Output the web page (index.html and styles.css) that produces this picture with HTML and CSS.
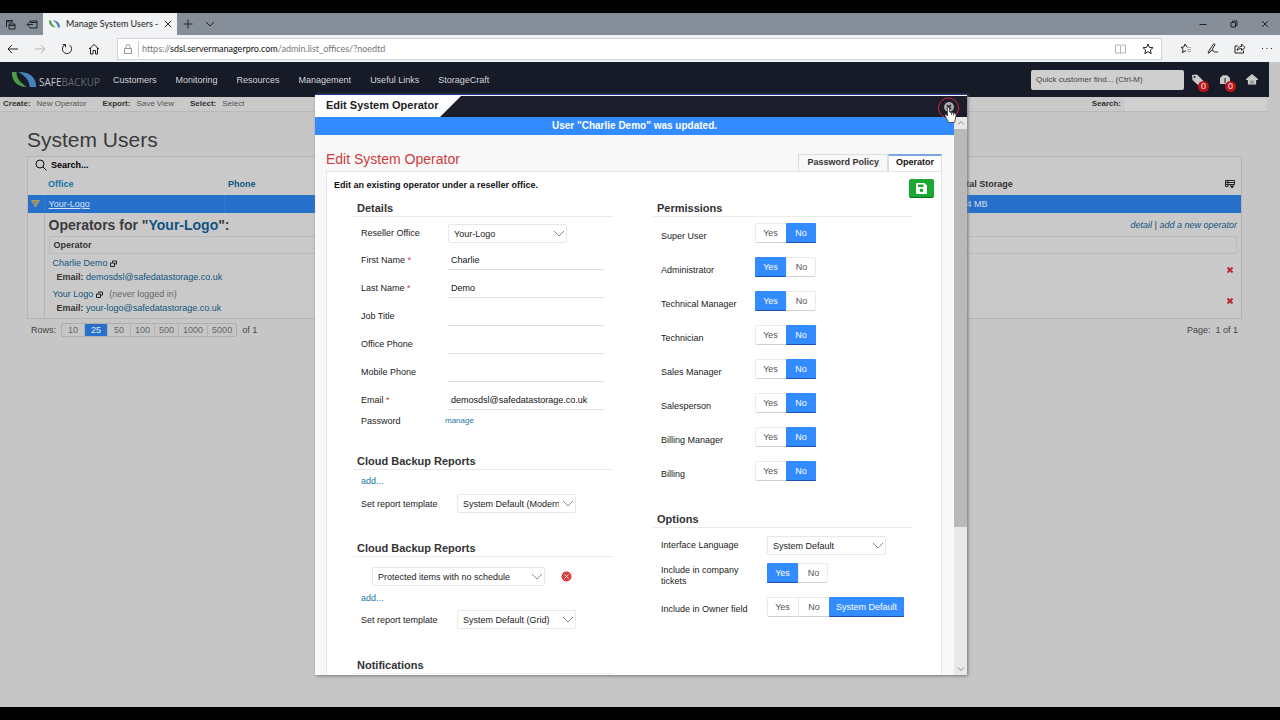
FILE: index.html
```html
<!DOCTYPE html>
<html lang="en">
<head>
<meta charset="utf-8">
<title>Manage System Users</title>
<link rel="stylesheet" href="styles.css">
</head>
<body>
<div class="browser">
  <div class="tabbar">
    <button class="chrome-btn" aria-label="Tabs set aside"><svg width="11" height="11" viewBox="0 0 11 11"><path d="M1.500 8V1.500H8M1.500 3H8M4 5H10V10H4ZM4 6.500H10"/></svg></button>
    <button class="chrome-btn" aria-label="Set tabs aside"><svg width="12" height="11" viewBox="0 0 12 11"><path d="M4 3.500V2H11V9H4V7.500M4 3.500H11M1 5.500H7M3 3.500L1 5.500L3 7.500"/></svg></button>
    <div class="tab">
      <svg class="tab-logo" width="11" height="8" viewBox="0 0 26 16"><path class="green" d="M0 0H5C5 7 9 11 16 16C5 16 0 9 0 0Z"/><path class="blue" d="M9 0C20 0 26 6 26 16H21C20 9 16 4 9 0Z"/></svg>
      <span class="tab-title">Manage System Users -</span>
      <button class="chrome-btn" aria-label="Close tab"><svg width="8" height="8" viewBox="0 0 8 8"><path d="M1 1L7 7M7 1L1 7"/></svg></button>
    </div>
    <button class="chrome-btn new-tab" aria-label="New tab"><svg width="10" height="10" viewBox="0 0 10 10"><path d="M5 0.500V9.500M0.500 5H9.500"/></svg></button>
    <button class="chrome-btn" aria-label="Tab previews"><svg width="10" height="8" viewBox="0 0 10 8"><path d="M1 2L5 6L9 2"/></svg></button>
    <div class="window-buttons">
      <button class="chrome-btn" aria-label="Minimise"><svg width="8" height="8" viewBox="0 0 8 8"><path d="M0.500 4.500H7.500"/></svg></button>
      <button class="chrome-btn" aria-label="Restore"><svg width="8" height="8" viewBox="0 0 8 8"><path d="M1 2.500H5.500V7H1ZM2.500 2.500V1H7V5.500H5.500"/></svg></button>
      <button class="chrome-btn" aria-label="Close"><svg width="8" height="8" viewBox="0 0 8 8"><path d="M1 1L7 7M7 1L1 7"/></svg></button>
    </div>
  </div>
  <div class="addressbar">
    <button class="chrome-btn" aria-label="Back"><svg width="12" height="10" viewBox="0 0 12 10"><path d="M11 5H1M5 1L1 5L5 9"/></svg></button>
    <button class="chrome-btn faded" aria-label="Forward"><svg width="12" height="10" viewBox="0 0 12 10"><path d="M1 5H11M7 1L11 5L7 9"/></svg></button>
    <button class="chrome-btn" aria-label="Refresh"><svg width="12" height="12" viewBox="0 0 12 12"><path d="M4 1.800A4.600 4.600 0 1 0 8.500 2.100M1.800 1.500H4.500V4.200"/></svg></button>
    <button class="chrome-btn" aria-label="Home"><svg width="12" height="12" viewBox="0 0 12 12"><path d="M1 6L6 1.500L11 6M2.500 5V11H5V7.500H7.500V11H9.500V5"/></svg></button>
    <div class="url-box">
      <svg class="lock" width="8" height="10" viewBox="0 0 8 10"><path d="M0.500 4.500H7.500V9.500H0.500ZM2 4.500V2.500A2 2 0 0 1 6 2.500V4.500"/></svg>
      <span class="url">https://<b>sdsl.servermanagerpro.com</b>/admin.list_offices/?noedtd</span>
      <button class="chrome-btn faded" aria-label="Reading view"><svg width="11" height="10" viewBox="0 0 11 10"><path d="M0.500 1H4.500L5.500 2L6.500 1H10.500V9H6.500L5.500 9.500L4.500 9H0.500ZM5.500 2V9"/></svg></button>
      <button class="chrome-btn" aria-label="Add to favourites"><svg width="12" height="12" viewBox="0 0 12 12"><path d="M6 1L7.400 4.400L11 4.700L8.300 7.100L9.200 10.700L6 8.700L2.800 10.700L3.700 7.100L1 4.700L4.600 4.400Z"/></svg></button>
    </div>
    <div class="browser-tools">
      <button class="chrome-btn" aria-label="Hub"><svg width="12" height="11" viewBox="0 0 12 11"><path d="M7 4L5 1L3.800 4L1 4.300L3.200 6.300L2.300 9.700L6 7.500"/><path class="hub-lines" d="M7 4.500H11M7 6.500H11M7 8.500H11"/></svg></button>
      <button class="chrome-btn" aria-label="Notes"><svg width="12" height="11" viewBox="0 0 12 11"><path d="M1 10L3 6L7 0.500L8 1.500L5 7L2 10ZM5 8C7 6 6.500 10 8 9C9 8.500 9.500 9.500 11 9"/></svg></button>
      <button class="chrome-btn" aria-label="Share"><svg width="12" height="11" viewBox="0 0 12 11"><path d="M4 3H1V10H9.500V7.500M3 7.500C3.500 4.500 5 3.500 7.500 3.500V1L11 4.500L7.500 7.500V5.500C5.500 5.500 4.500 6 3 7.500Z"/></svg></button>
      <button class="chrome-btn" aria-label="More"><svg width="12" height="4" viewBox="0 0 12 4"><path class="dots" d="M1 1H2V2H1ZM5.500 1H6.500V2H5.500ZM10 1H11V2H10Z"/></svg></button>
    </div>
  </div>

  <div class="site">
    <header class="site-header">
      <a class="brand" href="#"><svg width="26" height="15" viewBox="0 0 26 16"><path class="green" d="M0 0H5C5 7 9 11 16 16C5 16 0 9 0 0Z"/><path class="blue" d="M7 0C20 0 26 6 26 16H19C19 9 14 4 7 0Z"/></svg><span class="brand-safe">SAFE<span class="brand-backup">BACKUP</span></span></a>
      <nav class="main-nav"><a href="#">Customers</a><a href="#">Monitoring</a><a href="#">Resources</a><a href="#">Management</a><a href="#">Useful Links</a><a href="#">StorageCraft</a></nav>
      <input class="quick-find" type="text" placeholder="Quick customer find... (Ctrl-M)" aria-label="Quick customer find">
      <button class="head-icon" aria-label="Tags"><svg width="12" height="12" viewBox="0 0 12 12"><path d="M0 1L5 0.500L12 7.500L7 12L0.500 6Z"/><circle class="hole" cx="2.500" cy="3" r="1"/></svg><span class="badge">0</span></button>
      <button class="head-icon" aria-label="Store"><svg width="12" height="11" viewBox="0 0 12 11"><path d="M1 10V4L3.500 1.500L5.500 1L6 2L6.500 1L8.500 1.500L11 4V10Z"/><path class="hole" d="M5.500 4H6.500V9H5.500Z"/></svg><span class="badge">0</span></button>
      <button class="head-icon" aria-label="Home"><svg width="12" height="11" viewBox="0 0 13 12"><path d="M6.500 0L13 5.500V6.500H11V11.500H2V6.500H0V5.500Z"/><path class="hole-soft" d="M4.500 7H8.500V11.500H4.500Z"/></svg></button>
    </header>
    <div class="toolbar">
      <span class="tool"><b>Create:</b><a href="#">New Operator</a></span>
      <span class="tool"><b>Export:</b><a href="#">Save View</a></span>
      <span class="tool"><b>Select:</b><a href="#">Select</a></span>
      <label class="tool-search"><b>Search:</b><input type="text"></label>
    </div>
    <main class="content">
      <h1>System Users</h1>
      <div class="grid-box">
        <button class="grid-search"><svg width="12" height="12" viewBox="0 0 12 12"><circle cx="5" cy="5" r="4"/><path d="M8 8L11.500 11.500"/></svg>Search...</button>
        <table class="grid">
          <colgroup><col class="c-toggle"><col class="c-office"><col><col class="c-storage"></colgroup>
          <thead><tr><th></th><th><a class="sorted" href="#">Office</a></th><th><a href="#">Phone</a></th><th><span class="storage-head">Total Storage<svg width="10" height="9" viewBox="0 0 10 9"><path d="M0.500 0.500H9.500V4.500H0.500ZM0.500 2.500H9.500M3 0.500V6.500H0.500V4"/><path class="solid" d="M4.500 5.500H9.500L7 8.500Z"/></svg></span></th></tr></thead>
          <tbody>
            <tr class="selected"><td><svg class="tri" width="9" height="8" viewBox="0 0 9 8"><path d="M0.500 0.500H8.500L4.500 7Z"/></svg></td><td><a href="#">Your-Logo</a></td><td></td><td>104 MB</td></tr>
            <tr class="detail"><td></td><td colspan="3">
              <div class="detail-head"><h2>Operators for "<a href="#">Your-Logo</a>":</h2><span class="detail-links"><a href="#">detail</a> | <a href="#">add a new operator</a></span></div>
              <div class="operator-bar">Operator</div>
              <div class="operator"><div><div><a href="#">Charlie Demo</a> <svg class="pop" width="7" height="7" viewBox="0 0 7 7"><path d="M2.500 2.500V1H6.500V4H5M0.500 3H4.500V6.500H0.500Z"/></svg></div><div class="mail"><b>Email:</b> <a href="#">demosdsl@safedatastorage.co.uk</a></div></div><button class="delete" aria-label="Delete Charlie Demo"><svg width="6" height="6" viewBox="0 0 6 6"><path d="M0.500 0.500L5.500 5.500M5.500 0.500L0.500 5.500"/></svg></button></div>
              <div class="operator"><div><div><a href="#">Your Logo</a> <svg class="pop" width="7" height="7" viewBox="0 0 7 7"><path d="M2.500 2.500V1H6.500V4H5M0.500 3H4.500V6.500H0.500Z"/></svg> <span class="never">(never logged in)</span></div><div class="mail"><b>Email:</b> <a href="#">your-logo@safedatastorage.co.uk</a></div></div><button class="delete" aria-label="Delete Your Logo"><svg width="6" height="6" viewBox="0 0 6 6"><path d="M0.500 0.500L5.500 5.500M5.500 0.500L0.500 5.500"/></svg></button></div>
            </td></tr>
          </tbody>
        </table>
      </div>
      <div class="pager"><span>Rows:</span><div class="pages"><button>10</button><button class="on">25</button><button>50</button><button>100</button><button>500</button><button>1000</button><button>5000</button></div><span>of 1</span><span class="page-of">Page:&nbsp; 1 of 1</span></div>
    </main>
  </div>
</div>

<div class="overlay">
  <div class="modal" role="dialog" aria-label="Edit System Operator">
    <div class="modal-head"><span class="modal-title">Edit System Operator</span>
      <button class="close" aria-label="Close dialog"><svg width="12" height="12" viewBox="0 0 12 12"><circle cx="6" cy="6" r="5"/><path d="M4 4L8 8M8 4L4 8"/></svg></button>
    </div>
    <div class="modal-body">
      <div class="modal-page">
        <div class="notice">User "Charlie Demo" was updated.</div>
        <div class="tab-row"><h2>Edit System Operator</h2><div class="form-tabs"><button>Password Policy</button><button class="on">Operator</button></div></div>
        <form class="panel">
          <div class="panel-head"><b>Edit an existing operator under a reseller office.</b><button class="save" type="button" aria-label="Save"><svg width="11" height="11" viewBox="0 0 11 11"><path fill-rule="evenodd" d="M1 0H8.500L11 2.500V10Q11 11 10 11H1Q0 11 0 10V1Q0 0 1 0ZM2 1.500V4H7.500V1.500ZM5.500 5.500A1.800 1.800 0 1 0 5.510 5.500Z"/></svg></button></div>
          <div class="columns">
            <div class="col">
              <section class="details">
                <h3>Details</h3>
                <div class="field first"><label for="office">Reseller Office</label><select id="office" class="sel"><option>Your-Logo</option></select></div>
                <div class="field"><label for="fn">First Name <i>*</i></label><input id="fn" type="text" value="Charlie"></div>
                <div class="field"><label for="ln">Last Name <i>*</i></label><input id="ln" type="text" value="Demo"></div>
                <div class="field"><label for="jt">Job Title</label><input id="jt" type="text"></div>
                <div class="field"><label for="op">Office Phone</label><input id="op" type="text"></div>
                <div class="field"><label for="mp">Mobile Phone</label><input id="mp" type="text"></div>
                <div class="field"><label for="em">Email <i>*</i></label><input id="em" type="text" value="demosdsl@safedatastorage.co.uk"></div>
                <div class="password"><span>Password</span><a href="#">manage</a></div>
              </section>
              <section class="report">
                <h3>Cloud Backup Reports</h3>
                <a class="add" href="#">add...</a>
                <div class="template"><label for="t1">Set report template</label><select id="t1" class="sel"><option>System Default (Modern)</option></select></div>
              </section>
              <section class="report">
                <h3>Cloud Backup Reports</h3>
                <div class="report-item"><select class="sel wide" aria-label="Report"><option>Protected items with no schedule</option></select><button class="remove" type="button" aria-label="Remove report"><svg width="11" height="11" viewBox="0 0 11 11"><circle cx="5.500" cy="5.500" r="5"/><path d="M3.500 3.500L7.500 7.500M7.500 3.500L3.500 7.500"/></svg></button></div>
                <a class="add" href="#">add...</a>
                <div class="template"><label for="t2">Set report template</label><select id="t2" class="sel"><option>System Default (Grid)</option></select></div>
              </section>
              <section><h3>Notifications</h3></section>
            </div>
            <div class="col">
              <section class="permissions">
                <h3>Permissions</h3>
                <div class="perm" role="radiogroup" aria-label="Super User"><span>Super User</span><div class="toggle"><label><input type="radio" name="p1">Yes</label><label><input type="radio" name="p1" checked>No</label></div></div>
                <div class="perm" role="radiogroup" aria-label="Administrator"><span>Administrator</span><div class="toggle"><label><input type="radio" name="p2" checked>Yes</label><label><input type="radio" name="p2">No</label></div></div>
                <div class="perm" role="radiogroup" aria-label="Technical Manager"><span>Technical Manager</span><div class="toggle"><label><input type="radio" name="p3" checked>Yes</label><label><input type="radio" name="p3">No</label></div></div>
                <div class="perm" role="radiogroup" aria-label="Technician"><span>Technician</span><div class="toggle"><label><input type="radio" name="p4">Yes</label><label><input type="radio" name="p4" checked>No</label></div></div>
                <div class="perm" role="radiogroup" aria-label="Sales Manager"><span>Sales Manager</span><div class="toggle"><label><input type="radio" name="p5">Yes</label><label><input type="radio" name="p5" checked>No</label></div></div>
                <div class="perm" role="radiogroup" aria-label="Salesperson"><span>Salesperson</span><div class="toggle"><label><input type="radio" name="p6">Yes</label><label><input type="radio" name="p6" checked>No</label></div></div>
                <div class="perm" role="radiogroup" aria-label="Billing Manager"><span>Billing Manager</span><div class="toggle"><label><input type="radio" name="p7">Yes</label><label><input type="radio" name="p7" checked>No</label></div></div>
                <div class="perm" role="radiogroup" aria-label="Billing"><span>Billing</span><div class="toggle"><label><input type="radio" name="p8">Yes</label><label><input type="radio" name="p8" checked>No</label></div></div>
              </section>
              <section class="options">
                <h3>Options</h3>
                <div class="option language"><label for="lang">Interface Language</label><select id="lang" class="sel"><option>System Default</option></select></div>
                <div class="option tickets" role="radiogroup" aria-label="Include in company tickets"><span>Include in company tickets</span><div class="toggle"><label><input type="radio" name="o1" checked>Yes</label><label><input type="radio" name="o1">No</label></div></div>
                <div class="option owner" role="radiogroup" aria-label="Include in Owner field"><span>Include in Owner field</span><div class="toggle"><label><input type="radio" name="o2">Yes</label><label><input type="radio" name="o2">No</label><label class="long"><input type="radio" name="o2" checked>System Default</label></div></div>
              </section>
            </div>
          </div>
        </form>
      </div>
      <div class="scrollbar"><svg width="12" height="12" viewBox="0 0 12 12"><path d="M3 7.500L6 4.500L9 7.500"/></svg><div class="thumb"></div><svg width="12" height="12" viewBox="0 0 12 12"><path d="M3 4.500L6 7.500L9 4.500"/></svg></div>
    </div>
    <svg class="pointer" width="22" height="28" viewBox="0 0 22 28"><circle cx="10.500" cy="11" r="10"/><path d="M9.500 11.500C9.500 10 11.500 10 11.500 11.500V15L16 16C17.500 16.300 18 17 18 18.500C18 21 17 23 16.500 25.500H10.500C10 23 7.500 20.500 7 18.500C7 17 8.500 17.500 9.500 19Z"/><path d="M13.500 15.500V18M15.500 16V18.500"/></svg>
  </div>
</div>
</body>
</html>
```
FILE: styles.css
```css
* { box-sizing: border-box; }
body {
  margin: 0;
  min-height: 100vh;
  padding: 13px 0;
  display: flex;
  flex-direction: column;
  background: #000;
  font-family: "Liberation Sans", Arial, sans-serif;
  font-size: 9px;
  line-height: 12px;
  color: #333;
  overflow: hidden;
}
button, input, select { font: inherit; color: inherit; margin: 0; border-radius: 0; }
button { padding: 0; border: 0; background: none; }
a { text-decoration: none; color: #10557f; }
h1, h2, h3 { margin: 0; }
svg { display: block; fill: none; stroke: #222; flex: none; }
.green { fill: #4a9a48; stroke: none; }
.blue { fill: #4584bb; stroke: none; }

.browser { flex: 1; display: flex; flex-direction: column; }
.tabbar { display: flex; align-items: center; height: 22px; background: #868f99; padding-left: 5px; gap: 10px; }
.chrome-btn { display: grid; place-items: center; }
.tab { display: flex; align-items: center; align-self: stretch; width: 134px; margin-left: -5px; padding: 0 7px 0 6px; gap: 6px; background: #f1f2f3; }
.tab-title { flex: 1; font-family: Lato, sans-serif; font-size: 9px; color: #222; white-space: nowrap; }
.new-tab { margin: 0 2px 0 -4px; }
.window-buttons { display: flex; gap: 23px; margin-left: auto; margin-right: 11px; }
.addressbar { display: flex; align-items: center; height: 27px; background: #f1f2f3; padding: 2px 7px; gap: 15px; }
.faded svg { stroke: #b5b5b5; }
.url-box { flex: 1; display: flex; align-items: center; height: 22px; margin-left: 2px; padding: 0 7px 0 6px; gap: 16px; background: #fff; border: 1px solid #d0d2d6; }
.lock { stroke: #999; }
.url { flex: 1; margin-left: -10px; padding-left: 3px; border-left: 1px solid #ccc; font-family: Lato, sans-serif; font-size: 9px; line-height: 16px; color: #777; }
.url b { font-weight: 400; color: #111; }
.browser-tools { display: flex; align-items: center; gap: 15px; margin-left: 3px; }
.dots { fill: #222; stroke: none; }
.chrome-btn .hub-lines { stroke: #aaa; }

.site { flex: 1; padding-right: 11px; background: #c6c6c6; }
.site-header { display: flex; align-items: center; height: 35px; padding: 0 11px; background: #171a27; }
.brand { display: flex; align-items: flex-end; width: 102px; gap: 2px; }
.brand-safe { font-family: "Open Sans", sans-serif; font-size: 10px; line-height: 9px; color: #c4c6ca; }
.brand-backup { color: #656872; }
.main-nav { display: flex; flex: 1; gap: 19px; }
.main-nav a { color: #d4d5d9; }
.quick-find { width: 153px; height: 20px; padding: 0 5px; border: 0; border-radius: 2px; background: #cfcfcf; font-size: 8px; }
.quick-find::placeholder { color: #444; opacity: 1; }
.head-icon { position: relative; margin-left: 15px; }
.quick-find + .head-icon { margin-left: 8px; }
.head-icon svg { fill: #c9c9c9; stroke: none; }
.head-icon .hole { fill: #171a27; }
.head-icon .hole-soft { fill: #999; }
.badge { position: absolute; left: 6px; top: 7px; width: 11px; height: 11px; border-radius: 6px; background: #c01318; color: #eee; font-size: 9px; line-height: 11px; text-align: center; }
.toolbar { display: flex; align-items: center; height: 15px; background: #c9c9c9; border-bottom: 1px solid #b9b9b9; padding: 0 3px; font-size: 8px; }
.tool { display: flex; gap: 6px; padding-right: 16px; }
.tool a { color: #555; }
.tool-search { display: flex; gap: 4px; margin-left: auto; }
.tool-search input { width: 141px; height: 13px; border: 0; background: #d0d0d0; }

.content { padding: 15px 27px 0; }
h1 { font-size: 21px; line-height: 25px; font-weight: 400; color: #3a3a3a; }
.grid-box { margin-top: 4px; border: 1px solid #b4b4b4; background: #c9c9c9; }
.grid-search { display: flex; align-items: center; gap: 4px; height: 16px; padding-left: 7px; color: #000; font-weight: 700; }
.grid-search svg { stroke: #111; }
.grid { width: 100%; table-layout: fixed; border-collapse: collapse; }
.grid th, .grid td { padding: 0 4px; text-align: left; font-weight: 400; }
.grid th { height: 22px; font-weight: 700; }
.c-toggle { width: 16px; }
.c-office { width: 180px; }
.c-storage { width: 289px; }
.sorted { color: #1074a8; }
.storage-head { display: flex; justify-content: space-between; align-items: center; padding-right: 2px; }
.solid { fill: #222; stroke: none; }
.selected { background: #2670cc; color: #d6dfea; }
.grid .selected td { height: 18px; }
.grid .selected td + td { border-left: 1px solid #2f7ad6; }
.grid .selected td:first-child { padding: 0 3px; }
.selected a { color: #d6e2f2; text-decoration: underline; }
.tri { fill: #888; stroke: #b89a5c; }
.grid .detail > td + td { border-left: 1px solid #b4b4b4; padding: 0 4px 2px; }
.detail-head { display: flex; align-items: center; justify-content: space-between; height: 23px; }
.detail-head h2 { font-size: 14px; line-height: 18px; color: #3c3c3c; }
.detail-links { font-style: italic; }
.operator-bar { height: 18px; padding: 2px 4px; border: 1px solid #bababa; font-weight: 700; }
.operator { display: flex; justify-content: space-between; align-items: center; padding: 2px 4px 1px; line-height: 14px; }
.mail { padding-left: 4px; }
.pop { display: inline; vertical-align: -1px; }
.never { color: #666; margin-left: 4px; }
.delete svg { stroke: #b52c34; stroke-width: 2; }
.pager { display: flex; align-items: center; gap: 5px; margin-top: 4px; padding: 0 4px; color: #444; }
.pages { display: flex; border: 1px solid #aeaeae; border-radius: 2px; }
.pages button { height: 12px; min-width: 23px; padding: 0 4px; border-right: 1px solid #b4b4b4; color: #666; }
.pages button:last-child { border-right: 0; }
.pages .on { background: #2670cc; color: #e6edf7; }
.page-of { margin-left: auto; }

.overlay { position: absolute; inset: 94px 0 45px; display: flex; justify-content: center; padding-left: 2px; pointer-events: none; }
.modal { position: relative; display: flex; flex-direction: column; width: 652px; background: #f8f8f9; border-top: 1px solid #1c3f9c; box-shadow: 1px 1px 3px #777; pointer-events: auto; }
.modal-head { display: flex; align-items: center; justify-content: space-between; height: 22px; padding-right: 12px; border-top: 1px solid #fff; background: #1b1d2b; }
.modal-title { align-self: stretch; width: 146px; padding-left: 11px; background: #fff; clip-path: polygon(0 0, 100% 0, 125px 100%, 0 100%); font-size: 11px; line-height: 19px; font-weight: 700; color: #222; }
.close svg { fill: #aaa; stroke: none; }
.close path { stroke: #222; stroke-width: 1.500; }
.modal-body { flex: 1; min-height: 0; display: flex; }
.modal-page { flex: 1; min-width: 0; overflow: hidden; display: flex; flex-direction: column; }
.notice { flex: none; height: 18px; background: #338cff; color: #fff; font-size: 10px; font-weight: 700; line-height: 18px; text-align: center; }
.tab-row { flex: none; display: flex; justify-content: space-between; height: 36px; padding: 0 12px 0 11px; }
.tab-row h2 { margin-top: 16px; font-size: 14px; line-height: 16px; font-weight: 400; color: #cf3b3b; }
.form-tabs { display: flex; margin-top: 19px; }
.form-tabs button { padding: 0 8px 2px; border: 1px solid #ddd; border-bottom: 0; font-weight: 700; }
.form-tabs .on { padding: 0 7px 3px; border-top: 2px solid #7ba5e4; background: #fff; color: #111; }
.panel { flex: none; margin: 0 12px 0 11px; padding: 0 7px; border: 1px solid #e2e4e5; background: #fff; }
.panel-head { display: flex; justify-content: space-between; padding-top: 7px; color: #111; }
.save { display: grid; place-items: center; width: 25px; height: 19px; border-radius: 2px; background: #1aa832; border-bottom: 1px solid #0c6a1d; }
.save svg { fill: #fff; stroke: none; }
.columns { display: flex; gap: 40px; padding: 3px 19px 0; color: #222; }
.col { width: 260px; }
h3 { margin-bottom: 3px; padding-left: 4px; border-bottom: 1px solid #eaeaea; font-size: 11px; line-height: 15px; font-weight: 700; color: #333; }
.field { display: flex; height: 28px; padding-left: 8px; align-items: center; }
.field label { width: 87px; }
.field i { color: #d33; font-style: normal; }
.field input { width: 156px; height: 20px; padding: 0 3px; border: 0; border-bottom: 1px solid #dedede; background: none; color: #111; }
.sel { width: 119px; height: 19px; padding: 0 16px 0 5px; appearance: none; border: 1px solid #e8e8e8; border-radius: 2px; color: #222; background: linear-gradient(-45deg, transparent 45%, #888 45%, #888 55%, transparent 55%) right 2px center / 5px 5px no-repeat, linear-gradient(45deg, transparent 45%, #888 45%, #888 55%, transparent 55%) right 7px center / 5px 5px no-repeat, #fff; }
.field.first { height: 26px; align-items: flex-start; padding-top: 4px; }
.first label { line-height: 19px; }
.password { display: flex; padding: 1px 8px 0; }
.password span { width: 84px; }
.password a { font-size: 8px; }
.add, .password a { color: #1b78a8; }
.details { min-height: 253px; }
.report { min-height: 87px; }
.add { display: block; padding-left: 8px; line-height: 16px; }
.template { display: flex; align-items: center; padding: 5px 8px 0; }
.template label { width: 96px; }
.report-item { display: flex; align-items: center; gap: 16px; padding: 7px 0 5px 19px; }
.report-item + .add { line-height: 14px; }
.report + .report { min-height: 117px; }
.wide { width: 173px; }
.remove svg { fill: #e23b3b; stroke: none; }
.remove path { stroke: #fff; }
.perm { display: flex; height: 34px; padding: 4px 8px 0; }
.perm span { width: 94px; padding-top: 7px; }
.toggle { display: flex; height: 20px; border: 1px solid #ebebeb; border-bottom-color: #d0d0d0; border-radius: 2px; }
.toggle label { position: relative; width: 31px; margin: -1px 0; line-height: 20px; text-align: center; color: #555; }
.toggle label + label { border-left: 1px solid #ebebeb; }
.toggle label:first-child { margin-left: -1px; }
.toggle label:last-child { width: 30px; margin-right: -1px; }
.toggle input { position: absolute; opacity: 0; }
.toggle label:has(:checked) { background: #338cff; color: #fff; border-left: 0; border-bottom: 1px solid #1c4fb0; border-radius: 1px; }
.toggle .long:last-child { width: 75px; }
.permissions { min-height: 311px; }
.permissions h3 { margin-bottom: 2px; }
.option { display: flex; padding: 4px 8px 0; }
.option > :first-child { width: 106px; padding-right: 16px; }
.language { padding-top: 5px; line-height: 19px; }
.language > :first-child { padding: 0; }
.tickets { padding-top: 8px; line-height: 11px; }
.tickets > span { padding-top: 2px; }
.owner { padding-top: 10px; }
.option.owner > span { padding: 6px 0 0; }
.scrollbar { width: 13px; display: flex; flex-direction: column; align-items: center; justify-content: space-between; background: #e9e9e9; }
.scrollbar svg { stroke: #888; }
.thumb { align-self: stretch; flex: none; height: 398px; margin-bottom: auto; background: #b9b9b9; }
.pointer { position: absolute; right: 7px; top: 2px; }
.pointer circle { stroke: #d22636; }
.pointer path { fill: #fff; stroke: #333; stroke-width: 0.800; }
```
